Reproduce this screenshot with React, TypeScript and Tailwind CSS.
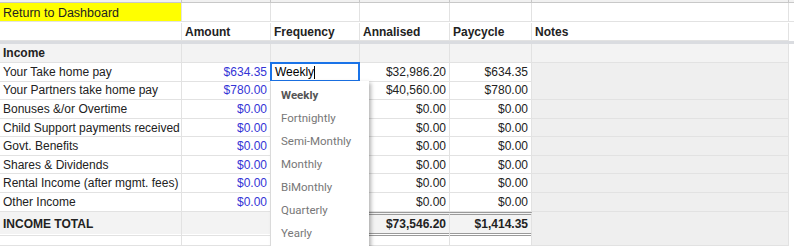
import React from 'react'

const COLS = 'grid grid-cols-[182px_89px_89px_90px_82px_257px_1fr]'
const cell = 'border-r border-b border-[#e2e2e2] flex items-center px-[3px] overflow-hidden whitespace-nowrap'

const rows = [
  { label: 'Your Take home pay', amount: '$634.35', freq: 'Weekly', annual: '$32,986.20', cycle: '$634.35', h: 'h-[18px]' },
  { label: 'Your Partners take home pay', amount: '$780.00', freq: '', annual: '$40,560.00', cycle: '$780.00', h: 'h-[19px]' },
  { label: 'Bonuses &/or Overtime', amount: '$0.00', freq: '', annual: '$0.00', cycle: '$0.00', h: 'h-[19px]' },
  { label: 'Child Support payments received', amount: '$0.00', freq: '', annual: '$0.00', cycle: '$0.00', h: 'h-[18px]' },
  { label: 'Govt. Benefits', amount: '$0.00', freq: '', annual: '$0.00', cycle: '$0.00', h: 'h-[19px]' },
  { label: 'Shares & Dividends', amount: '$0.00', freq: '', annual: '$0.00', cycle: '$0.00', h: 'h-[18px]' },
  { label: 'Rental Income (after mgmt. fees)', amount: '$0.00', freq: '', annual: '$0.00', cycle: '$0.00', h: 'h-[19px]' },
  { label: 'Other Income', amount: '$0.00', freq: '', annual: '$0.00', cycle: '$0.00', h: 'h-[19px]' },
]

const options = ['Weekly', 'Fortnightly', 'Semi-Monthly', 'Monthly', 'BiMonthly', 'Quarterly', 'Yearly']

export default function App() {
  return (
    <div className="relative w-[794px] h-[246px] overflow-hidden bg-white text-[12px] text-[#222] font-['Liberation_Sans',Arial,sans-serif]">
      {/* column header strip (cut off) */}
      <div className={`${COLS} h-[3px] bg-[#f1f1f1] border-b border-[#c8c8c8]`}>
        <div className="border-r border-[#c8c8c8]" />
        <div className="border-r border-[#c8c8c8]" />
        <div className="border-r border-[#c8c8c8]" />
        <div className="border-r border-[#c8c8c8]" />
        <div className="border-r border-[#c8c8c8]" />
        <div className="border-r border-[#c8c8c8]" />
        <div />
      </div>

      {/* row 1 */}
      <div className={`${COLS} h-[19px]`}>
        <div className={`${cell} bg-[#ffff00] text-[12.5px] pt-[2px]`}>Return to Dashboard</div>
        <div className={cell} />
        <div className={cell} />
        <div className={cell} />
        <div className={cell} />
        <div className={cell} />
        <div className="border-b border-[#e2e2e2]" />
      </div>

      {/* headers */}
      <div className={`${COLS} h-[19px] font-bold pt-[1px]`}>
        <div className={cell} />
        <div className={cell}>Amount</div>
        <div className={cell}>Frequency</div>
        <div className={cell}>Annalised</div>
        <div className={cell}>Paycycle</div>
        <div className={cell}>Notes</div>
        <div />
      </div>

      {/* frozen divider */}
      <div className="h-[3px] bg-[#dadce0]" />

      {/* Income section */}
      <div className={`${COLS} h-[19px] bg-[#f3f3f3] font-bold`}>
        <div className={cell}>Income</div>
        <div className={cell} />
        <div className={cell} />
        <div className={cell} />
        <div className={cell} />
        <div className={cell} />
        <div className="bg-white" />
      </div>

      {rows.map((r, i) => (
        <div key={r.label} className={`${COLS} ${r.h}`}>
          <div className={cell}>{r.label}</div>
          <div className={`${cell} justify-end text-[#3434d6]`}>{r.amount}</div>
          {i === 0 ? (
            <div className="flex items-center pl-[3px] border-2 border-[#1a73e8] -ml-px -mt-px h-[20px] bg-white text-black">
              {r.freq}
              <span className="inline-block w-px h-[13px] bg-black" />
            </div>
          ) : (
            <div className={cell} />
          )}
          <div className={`${cell} justify-end`}>{r.annual}</div>
          <div className={`${cell} justify-end`}>{r.cycle}</div>
          <div className={`${cell} bg-[#efefef]`} />
          <div />
        </div>
      ))}

      {/* total */}
      <div className={`${COLS} h-[22px] bg-[#f3f3f3] font-bold`}>
        <div className={cell}>INCOME TOTAL</div>
        <div className={cell} />
        <div className={cell} />
        <div className="flex items-center justify-end px-[3px] border-r border-[#e2e2e2] border-y-[3px] border-y-[#9a9a9a] border-double">$73,546.20</div>
        <div className="flex items-center justify-end px-[3px] border-r border-[#e2e2e2] border-y-[3px] border-y-[#9a9a9a] border-double">$1,414.35</div>
        <div className={`${cell} bg-[#efefef]`} />
        <div className="bg-white" />
      </div>

      <div className={`${COLS} h-[12px]`}>
        <div className={cell} />
        <div className={cell} />
        <div className={cell} />
        <div className={cell} />
        <div className={cell} />
        <div className={`${cell} bg-[#efefef]`} />
        <div />
      </div>

      {/* frequency dropdown */}
      <div className="absolute left-[271px] top-[81px] w-[98px] h-[180px] bg-white shadow-[2px_2px_4px_rgba(0,0,0,0.3)] pt-[3px] font-['Roboto',Arial,sans-serif] text-[11.5px]">
        {options.map((o, i) => (
          <div
            key={o}
            className={`h-[23px] flex items-center pl-[10px] ${i === 0 ? 'font-bold text-[#555]' : 'text-[#777]'}`}
          >
            {o}
          </div>
        ))}
      </div>
    </div>
  )
}
